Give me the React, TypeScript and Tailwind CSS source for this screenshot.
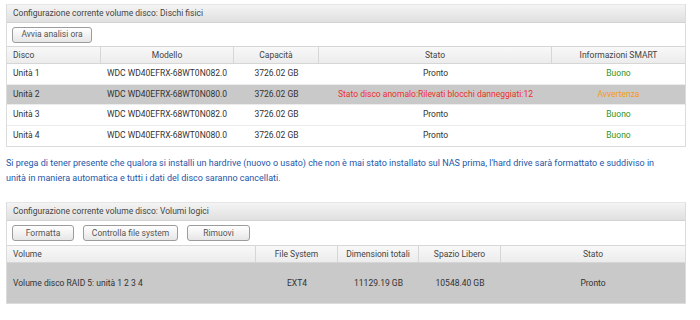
import React from "react";

const disks = [
  { name: "Unità 1", model: "WDC WD40EFRX-68WT0N082.0", cap: "3726.02 GB", stato: "Pronto", smart: "Buono", bad: false },
  { name: "Unità 2", model: "WDC WD40EFRX-68WT0N080.0", cap: "3726.02 GB", stato: "Stato disco anomalo:Rilevati blocchi danneggiati:12", smart: "Avvertenza", bad: true },
  { name: "Unità 3", model: "WDC WD40EFRX-68WT0N082.0", cap: "3726.02 GB", stato: "Pronto", smart: "Buono", bad: false },
  { name: "Unità 4", model: "WDC WD40EFRX-68WT0N080.0", cap: "3726.02 GB", stato: "Pronto", smart: "Buono", bad: false },
];

const Btn = ({ children, w }: { children: React.ReactNode; w: string }) => (
  <button
    className={`${w} h-[16px] rounded-[3px] border border-[#9c9c9c] bg-gradient-to-b from-[#ffffff] to-[#e6e6e6] text-[8.5px] leading-none text-[#555] shadow-[0_1px_0_#fff]`}
  >
    {children}
  </button>
);

const TitleBar = ({ children }: { children: React.ReactNode }) => (
  <div className="h-[18px] flex items-center px-[6px] bg-gradient-to-b from-[#f4f4f4] to-[#e0e0e0] border-b border-[#d2d2d2] text-[#444]">
    {children}
  </div>
);

const headCell = "h-[16px] flex items-center justify-center border-r border-[#d6d6d6] text-[#444]";

const App = () => {
  return (
    <div
      className="w-[700px] h-[320px] bg-white overflow-hidden text-[8.5px]"
      style={{ fontFamily: "Roboto, 'Liberation Sans', sans-serif" }}
    >
      <div className="pt-[4px] pl-[6px] w-[686px]">
        {/* Dischi fisici */}
        <div className="border border-[#dcdcdc] border-t-[#e6e6e6]">
          <TitleBar>Configurazione corrente volume disco: Dischi fisici</TitleBar>
          <div className="h-[23px] flex items-center px-[5px] bg-white">
            <Btn w="w-[80px]">Avvia analisi ora</Btn>
          </div>
          <div className="grid grid-cols-[93px_134px_85px_233px_1fr] bg-gradient-to-b from-[#f8f8f8] to-[#ececec] border-y border-[#d6d6d6]">
            <div className={`${headCell} !justify-start pl-[6px] border-r-0`}>Disco</div>
            <div className={`${headCell} border-l border-[#d6d6d6]`}>Modello</div>
            <div className={headCell}>Capacità</div>
            <div className={headCell}>Stato</div>
            <div className={`${headCell} border-r-0`}>Informazioni SMART</div>
          </div>
          {disks.map((d) => (
            <div
              key={d.name + d.model}
              className={`grid grid-cols-[93px_134px_85px_233px_1fr] h-[20.5px] items-center border-b border-[#ececec] last:border-b-0 text-[#333] ${
                d.bad ? "bg-[#c9c9c9]" : "bg-white"
              }`}
            >
              <div className="pl-[6px]">{d.name}</div>
              <div className="text-center">{d.model}</div>
              <div className="text-center">{d.cap}</div>
              <div className={`text-center whitespace-nowrap ${d.bad ? "text-[#ec2f2a]" : ""}`}>{d.stato}</div>
              <div className={`text-center ${d.bad ? "text-[#f59c12]" : "text-[#2f9428]"}`}>{d.smart}</div>
            </div>
          ))}
        </div>

        {/* Nota */}
        <p className="mt-[9px] text-[9px] leading-[15px] text-[#2456a8] pr-[20px]">
          Si prega di tener presente che qualora si installi un hardrive (nuovo o usato) che non è mai stato installato sul NAS prima, l'hard drive sarà formattato e suddiviso in unità in maniera automatica e tutti i dati del disco saranno cancellati.
        </p>

        {/* Volumi logici */}
        <div className="mt-[16px] border border-[#dcdcdc] border-t-[#e6e6e6]">
          <TitleBar>Configurazione corrente volume disco: Volumi logici</TitleBar>
          <div className="h-[24px] flex items-center gap-[9px] px-[5px] bg-white">
            <Btn w="w-[62px]">Formatta</Btn>
            <Btn w="w-[95px]">Controlla file system</Btn>
            <Btn w="w-[63px]">Rimuovi</Btn>
          </div>
          <div className="grid grid-cols-[249px_82px_81px_82px_1fr] bg-gradient-to-b from-[#f8f8f8] to-[#ececec] border-y border-[#d6d6d6]">
            <div className={`${headCell} !justify-start pl-[6px]`}>Volume</div>
            <div className={headCell}>File System</div>
            <div className={headCell}>Dimensioni totali</div>
            <div className={headCell}>Spazio Libero</div>
            <div className={`${headCell} border-r-0`}>Stato</div>
          </div>
          <div className="grid grid-cols-[249px_82px_81px_82px_1fr] h-[40px] items-center bg-[#c9c9c9] text-[#333]">
            <div className="pl-[6px]">Volume disco RAID 5: unità 1 2 3 4</div>
            <div className="text-center">EXT4</div>
            <div className="text-center">11129.19 GB</div>
            <div className="text-center">10548.40 GB</div>
            <div className="text-center">Pronto</div>
          </div>
        </div>
      </div>
    </div>
  );
};

export default App;
